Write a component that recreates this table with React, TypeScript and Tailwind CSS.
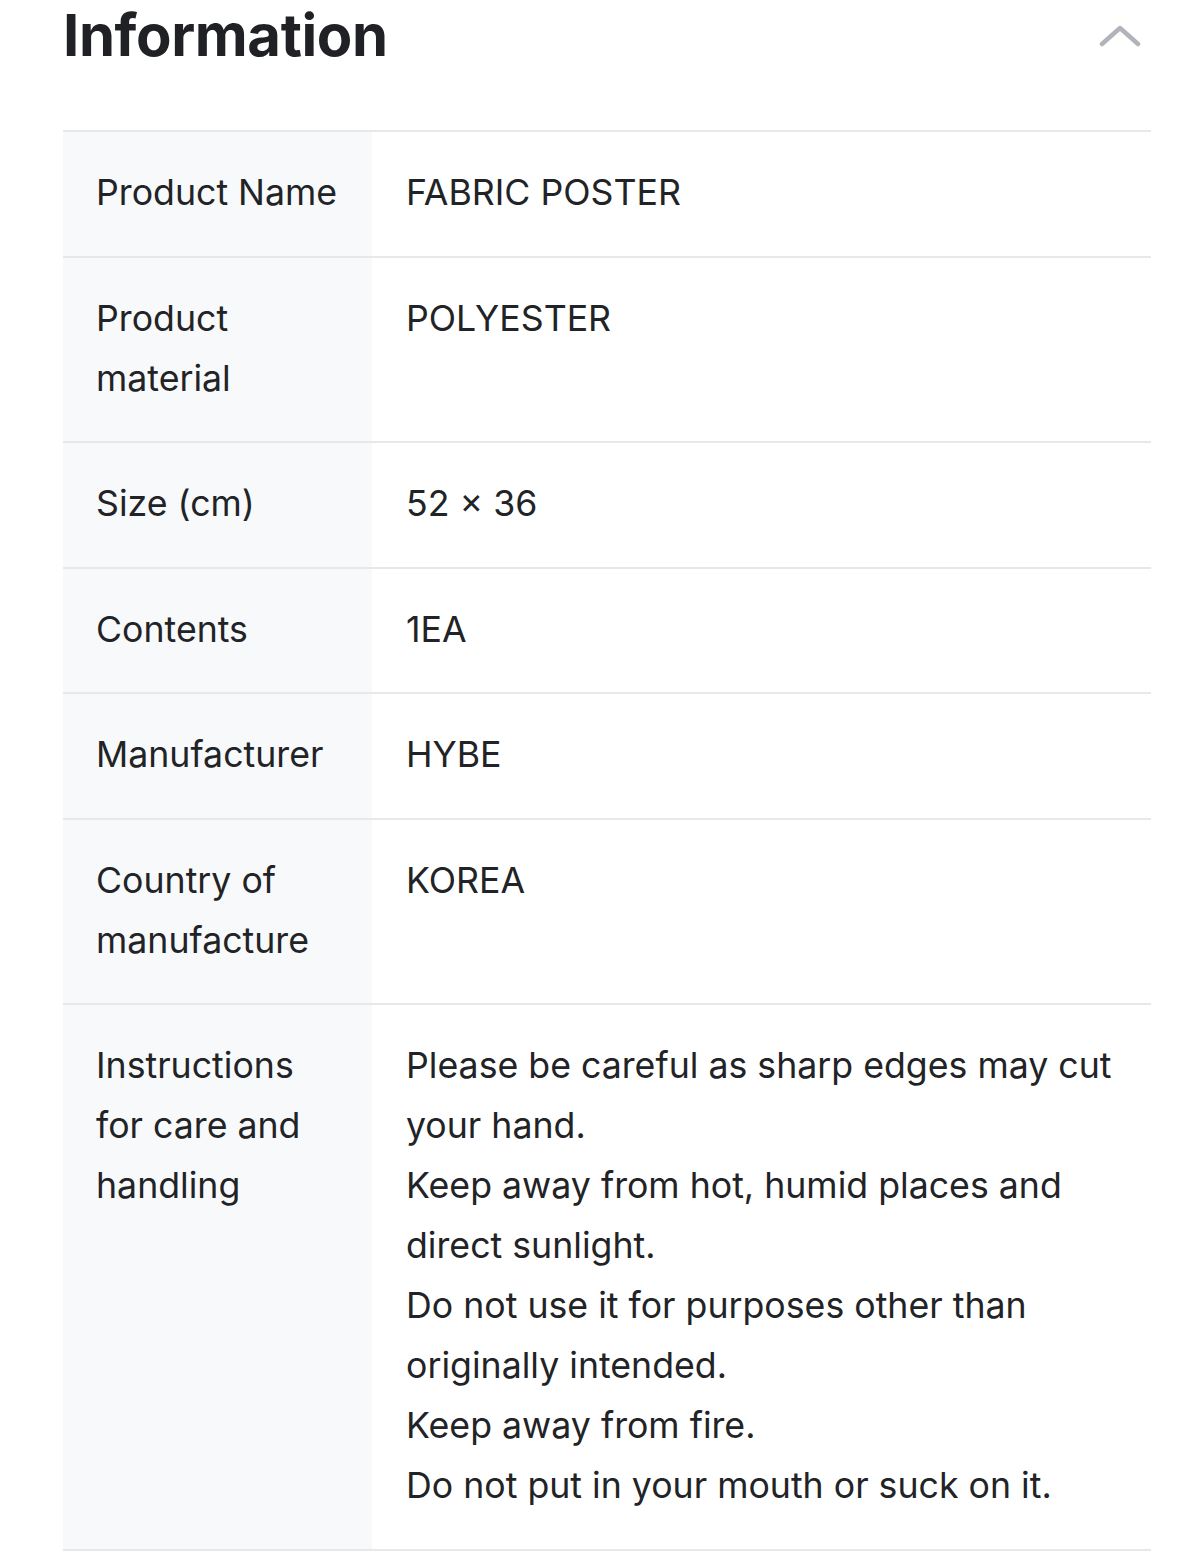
const rows: { label: string; value: string[] }[] = [
  { label: "Product Name", value: ["FABRIC POSTER"] },
  { label: "Product material", value: ["POLYESTER"] },
  { label: "Size (cm)", value: ["52 × 36"] },
  { label: "Contents", value: ["1EA"] },
  { label: "Manufacturer", value: ["HYBE"] },
  { label: "Country of manufacture", value: ["KOREA"] },
  {
    label: "Instructions for care and handling",
    value: [
      "Please be careful as sharp edges may cut your hand.",
      "Keep away from hot, humid places and direct sunlight.",
      "Do not use it for purposes other than originally intended.",
      "Keep away from fire.",
      "Do not put in your mouth or suck on it.",
    ],
  },
];

export default function App() {
  return (
    <div className="bg-white min-h-[1555px] pl-[63px] pr-[31px] font-['Inter',sans-serif] text-[#222326]">
      <div className="flex items-start justify-between h-[130px]">
        <h2 className="text-[58px] font-bold leading-[70px] tracking-[-0.4px] text-[#1f2125]">
          Information
        </h2>
        <svg
          className="mt-[24px] mr-[10px]"
          width="42"
          height="24"
          viewBox="0 0 42 24"
          fill="none"
          stroke="#b1b5bb"
          strokeWidth="4.5"
          strokeLinecap="round"
          strokeLinejoin="round"
        >
          <path d="M3 20 L21 4 L39 20" />
        </svg>
      </div>
      <div className="border-t-2 border-[#e7e8ea]">
        {rows.map((r) => (
          <div key={r.label} className="flex border-b-2 border-[#e7e8ea] text-[35.7px] leading-[60px]">
            <div className="w-[309px] shrink-0 bg-[#f8f9fb] pl-[33px] pr-[28px] pt-[30px] pb-[33.5px]">
              {r.label}
            </div>
            <div className="flex-1 pl-[34px] pr-[20px] pt-[30px] pb-[33.5px]">
              {r.value.map((v) => (
                <div key={v}>{v}</div>
              ))}
            </div>
          </div>
        ))}
      </div>
    </div>
  );
}
